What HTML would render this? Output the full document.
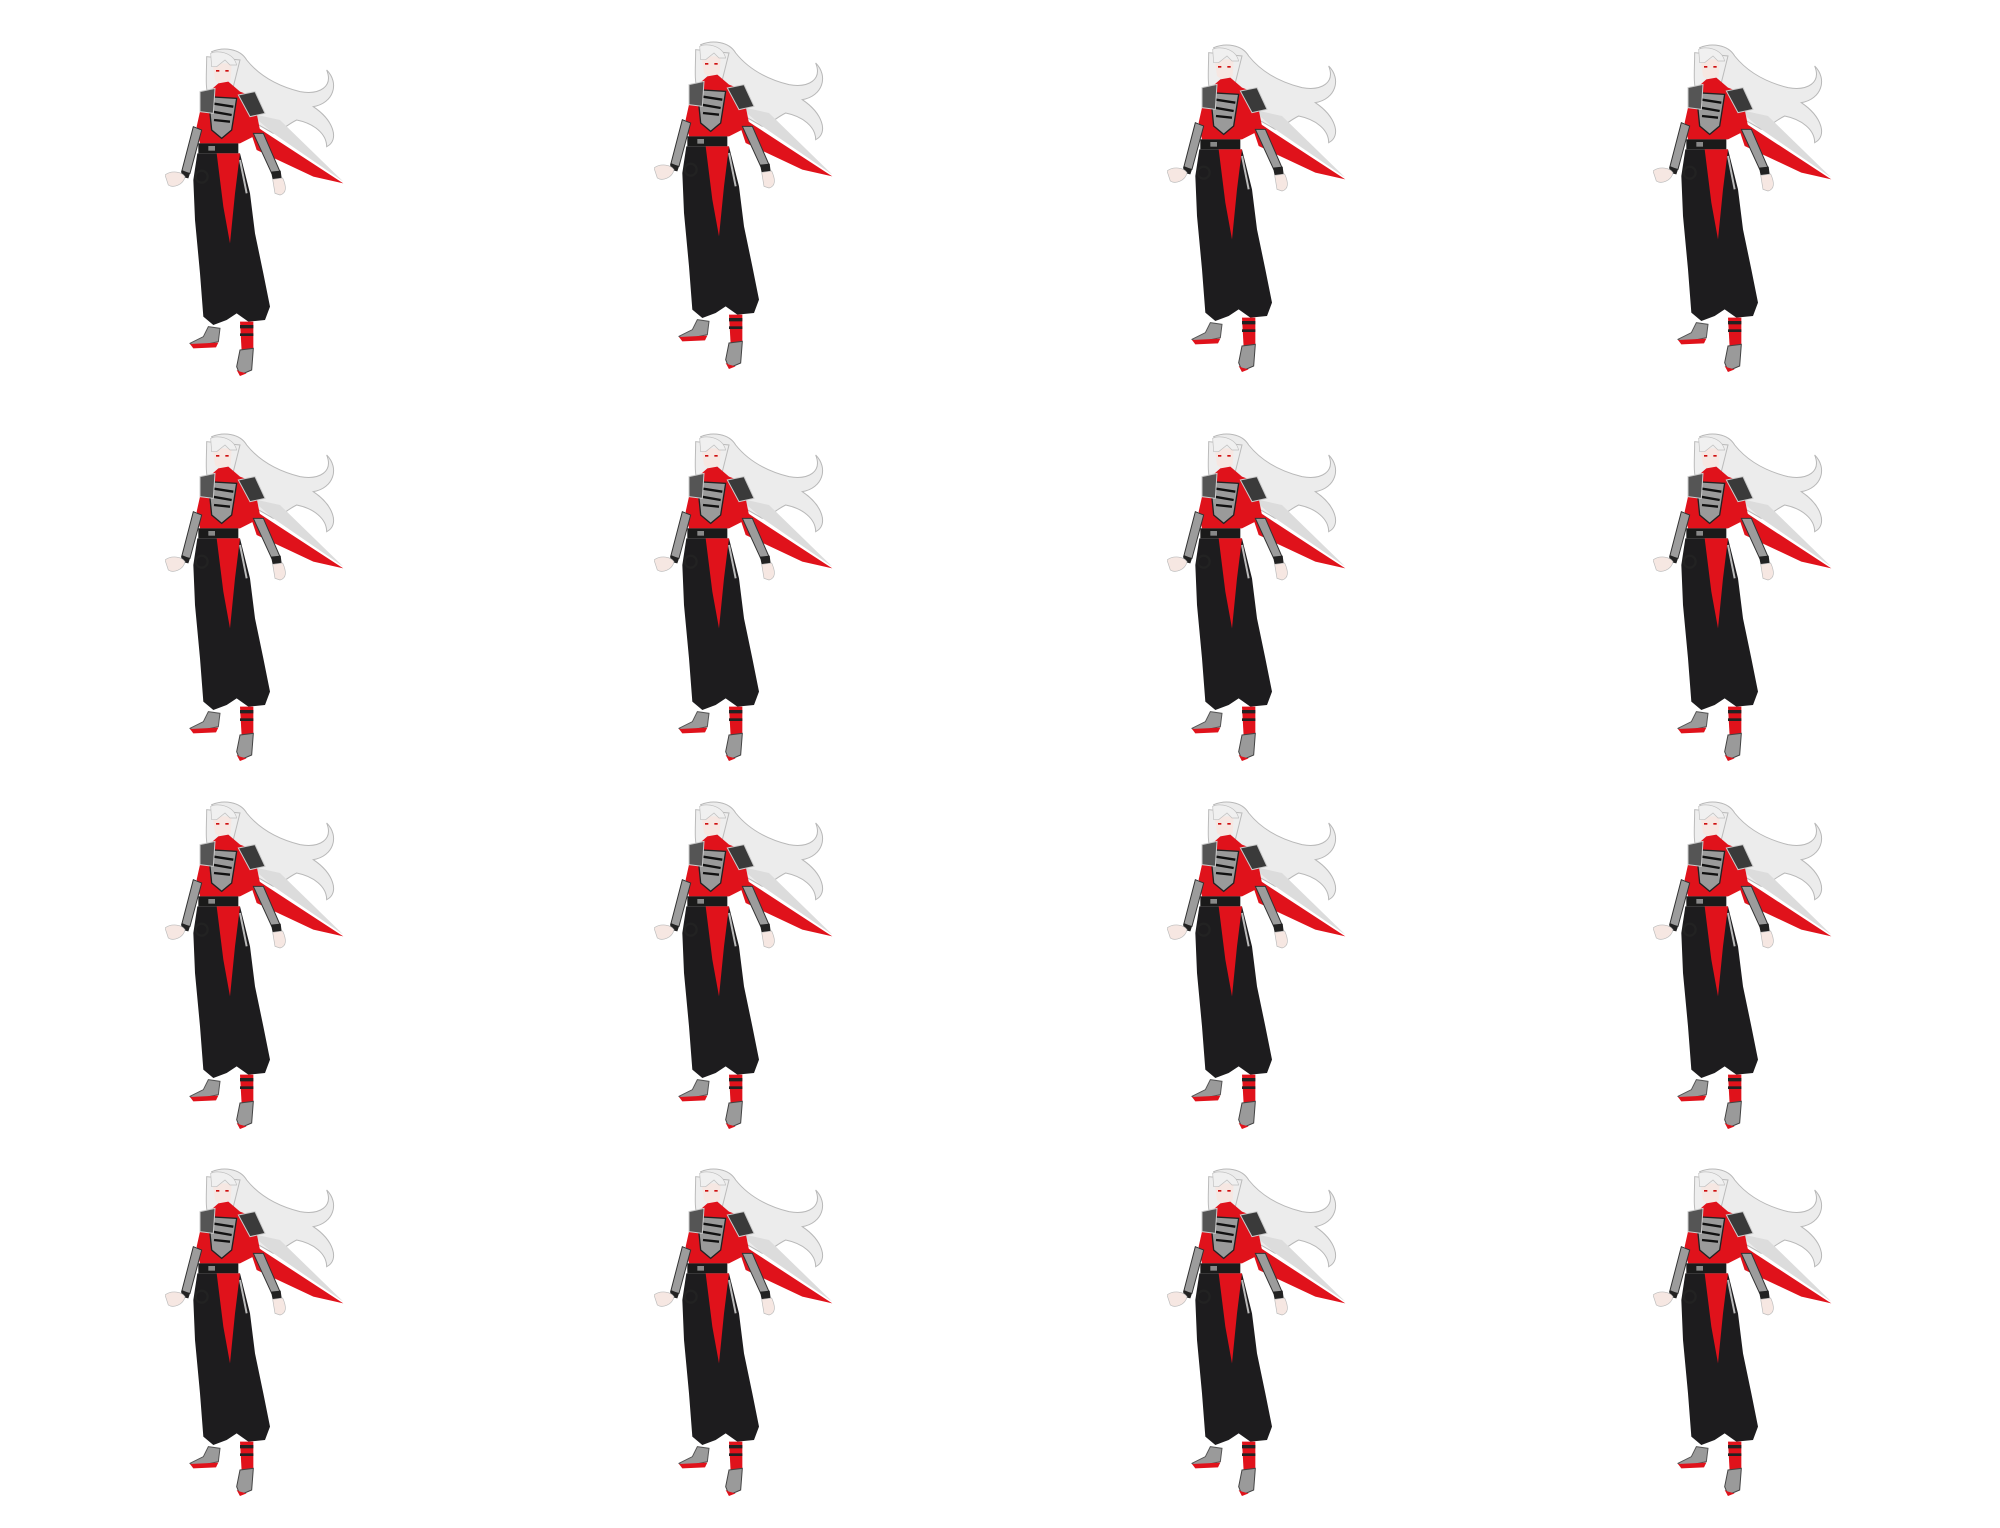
<!DOCTYPE html>
<html><head><meta charset="utf-8"><style>
html,body{margin:0;padding:0;background:#fff;width:2000px;height:1528px;overflow:hidden;position:relative}
svg.f{position:absolute;width:185px;height:330px}
</style></head><body>
<svg width="0" height="0" style="position:absolute">
<defs>
<symbol id="fig" viewBox="75 84 555 990">
 <!-- hair flowing -->
 <path d="M215 95 C250 80 300 85 320 120 C360 170 420 200 480 215 C540 225 580 200 560 150 C600 190 580 250 520 260 C580 300 600 360 560 380 C560 340 520 310 470 300 C430 320 420 340 400 340 L330 300 L280 200 Z" fill="#ececec" stroke="#b8b8b8" stroke-width="3"/>
 <path d="M200 110 C200 160 195 200 205 230 L230 210 L280 200 L300 120 Z" fill="#eeeeee" stroke="#bbb" stroke-width="3"/>
 <!-- face -->
 <path d="M218 130 L275 130 L272 180 L248 198 L225 180 Z" fill="#f6e7e2"/>
 <path d="M212 100 C230 90 280 95 290 135 L270 135 L255 120 L230 140 L215 140 Z" fill="#f0f0f0" stroke="#c0c0c0" stroke-width="2"/>
 <rect x="228" y="150" width="10" height="5" fill="#d01010"/><rect x="256" y="150" width="10" height="5" fill="#d01010"/>
 <!-- cape -->
 <path d="M320 300 L380 340 L610 490 L520 470 L350 390 Z" fill="#e0121b"/>
 <path d="M330 280 L420 300 L610 485 L400 340 Z" fill="#dcdcdc"/>
 <!-- torso -->
 <path d="M235 190 L265 185 L300 215 L340 230 L360 330 L340 350 L300 370 L180 370 L170 320 L190 230 Z" fill="#e0121b"/>
 <path d="M205 230 L290 235 L275 330 L245 355 L215 330 Z" fill="#9a9a9a" stroke="#222" stroke-width="4"/>
 <path d="M215 250 L280 260 M218 275 L275 285 M222 300 L270 305" stroke="#111" stroke-width="7"/>
 <path d="M180 215 L225 205 L220 280 L180 275 Z" fill="#555" stroke="#ccc" stroke-width="3"/>
 <path d="M295 225 L345 215 L375 280 L330 290 Z" fill="#3a3a3a" stroke="#ccc" stroke-width="3"/>
 <!-- arms -->
 <path d="M160 320 L185 330 L150 460 L125 455 Z" fill="#9c9c9c" stroke="#333" stroke-width="3"/>
 <path d="M125 450 L150 460 L145 475 L122 470 Z" fill="#222"/>
 <path d="M75 465 C95 450 125 455 135 470 C130 495 100 505 85 495 Z" fill="#f6e7e2" stroke="#bbb" stroke-width="2"/>
 <path d="M340 340 L370 340 L420 455 L395 460 Z" fill="#9c9c9c" stroke="#333" stroke-width="3"/>
 <path d="M393 455 L422 452 L425 475 L398 478 Z" fill="#222"/>
 <path d="M398 478 L428 474 C440 500 440 520 420 525 L405 520 Z" fill="#f6e7e2" stroke="#bbb" stroke-width="2"/>
 <!-- pants -->
 <path d="M172 400 L300 400 L330 520 L345 640 L370 760 L390 860 L375 900 L325 905 L290 880 L260 900 L220 915 L190 890 L180 760 L165 600 L160 480 Z" fill="#1d1c1e"/>
 <!-- belt -->
 <rect x="175" y="370" width="120" height="30" fill="#1a1a1a"/>
 <rect x="205" y="378" width="20" height="14" fill="#888"/>
 <!-- red tabard -->
 <path d="M230 400 L300 400 L285 520 L270 670 L250 560 Z" fill="#e0121b"/>
 <circle cx="185" cy="470" r="18" fill="none" stroke="#222" stroke-width="7"/>
 <path d="M300 420 L320 520" stroke="#bbb" stroke-width="6"/>
 <!-- legs/feet -->
 <path d="M205 920 L240 925 L235 965 L165 980 L150 970 L190 950 Z" fill="#9a9a9a" stroke="#555" stroke-width="3"/>
 <path d="M150 972 L235 968 L228 982 L160 985 Z" fill="#e0121b"/>
 <path d="M300 905 L340 905 L340 995 L305 995 Z" fill="#e0121b"/>
 <rect x="300" y="915" width="40" height="10" fill="#222"/><rect x="300" y="940" width="40" height="8" fill="#222"/>
 <path d="M300 990 L340 985 L335 1050 L300 1065 L290 1040 Z" fill="#9a9a9a" stroke="#444" stroke-width="3"/>
 <path d="M290 1050 L300 1068 L320 1060 L300 1055 Z" fill="#e0121b"/>
</symbol>
</defs>
</svg>
<svg class="f" style="left:165px;top:48px"><use href="#fig"/></svg>
<svg class="f" style="left:654px;top:41px"><use href="#fig"/></svg>
<svg class="f" style="left:1167px;top:44px"><use href="#fig"/></svg>
<svg class="f" style="left:1653px;top:44px"><use href="#fig"/></svg>

<svg class="f" style="left:165px;top:433px"><use href="#fig"/></svg>
<svg class="f" style="left:654px;top:433px"><use href="#fig"/></svg>
<svg class="f" style="left:1167px;top:433px"><use href="#fig"/></svg>
<svg class="f" style="left:1653px;top:433px"><use href="#fig"/></svg>

<svg class="f" style="left:165px;top:801px"><use href="#fig"/></svg>
<svg class="f" style="left:654px;top:801px"><use href="#fig"/></svg>
<svg class="f" style="left:1167px;top:801px"><use href="#fig"/></svg>
<svg class="f" style="left:1653px;top:801px"><use href="#fig"/></svg>

<svg class="f" style="left:165px;top:1168px"><use href="#fig"/></svg>
<svg class="f" style="left:654px;top:1168px"><use href="#fig"/></svg>
<svg class="f" style="left:1167px;top:1168px"><use href="#fig"/></svg>
<svg class="f" style="left:1653px;top:1168px"><use href="#fig"/></svg>
</body></html>
